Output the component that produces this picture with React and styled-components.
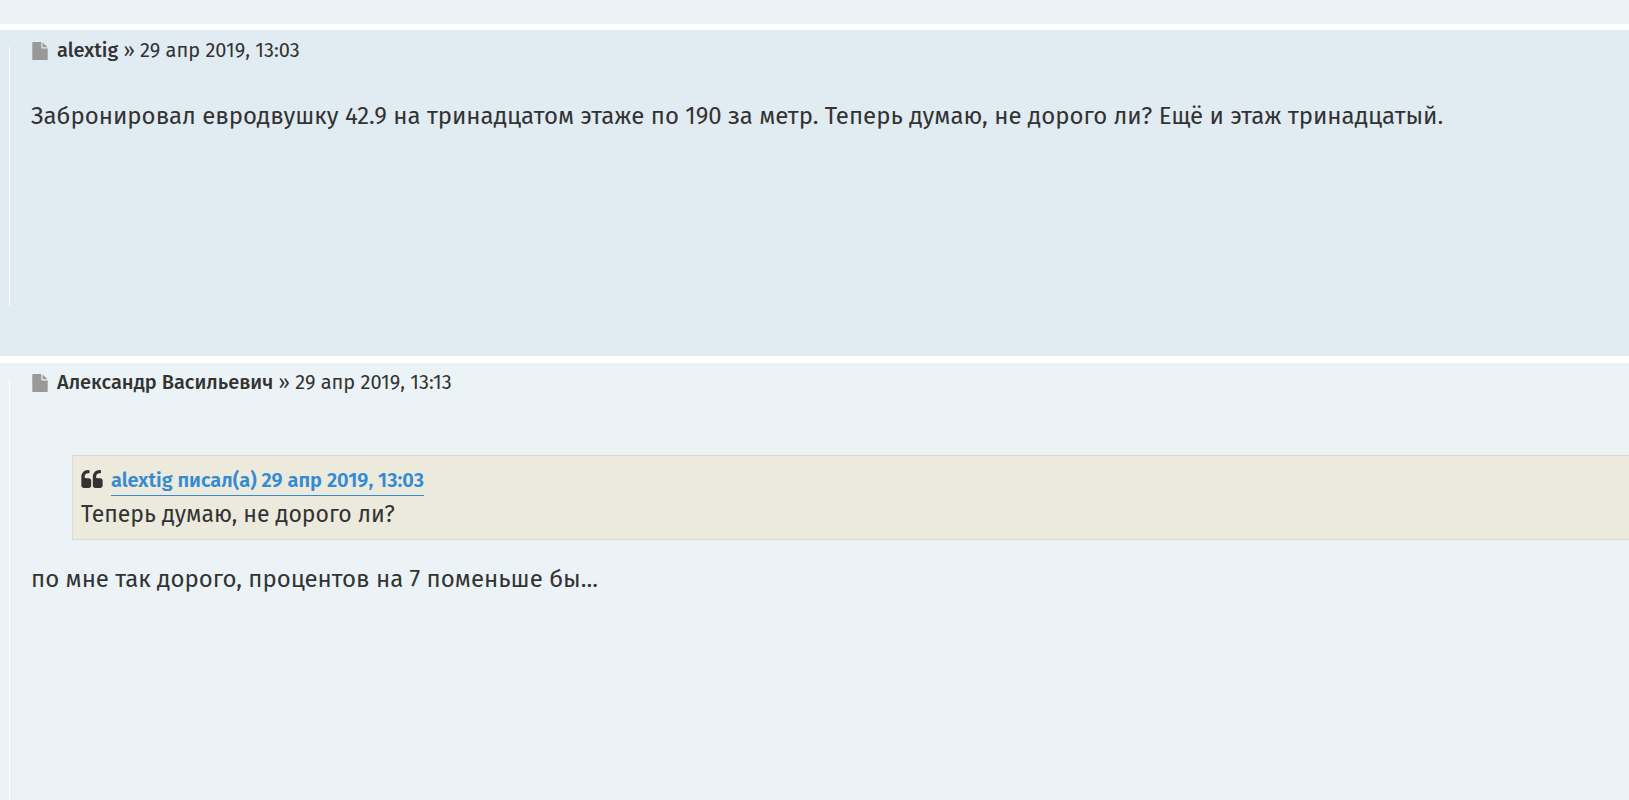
import React from 'react';
import styled, { createGlobalStyle } from 'styled-components';

const GlobalStyle = createGlobalStyle`
  * {
    box-sizing: border-box;
  }

  body {
    margin: 0;
    background: #ffffff;
    color: #333333;
    font-family: 'Fira Sans', 'Noto Sans', sans-serif;
    overflow: hidden;
  }
`;

const Topic = styled.main`
  display: flex;
  flex-direction: column;
  gap: 6px;
  min-height: 100vh;
`;

const PreviousPost = styled.div`
  height: 24px;
  background: #ebf3f6;
`;

const Post = styled.article`
  padding: ${props => props.$last ? '16px 0 0 9px' : '17px 0 50px 9px'};
  background: ${props => props.$odd ? '#ebf3f6' : '#e1ebf2'};
  flex-grow: ${props => props.$last ? 1 : 0};
  margin-bottom: ${props => props.$last ? 0 : '1px'};
  display: flex;
`;

const PostBody = styled.div`
  flex: 1;
  min-width: 0;
  min-height: 259px;
  padding-left: 21px;
  border-left: 1px solid #ffffff;
`;

const Author = styled.p`
  display: flex;
  align-items: center;
  margin: -11px 0 0;
  font-size: 20px;
  line-height: 28px;
  white-space: pre;
`;

const FileLink = styled.a`
  display: flex;
  margin: 1px 9px 0 1px;
  color: #999999;
`;

const Username = styled.strong`
  font-weight: 500;
`;

const Content = styled.div`
  margin-top: 36px;
  font-size: 24px;
  line-height: 32px;
`;

const Quote = styled.blockquote`
  margin: 59px 0 23px 41px;
  padding: 8px;
  background: #ebeadd;
  border: 1px solid #dbdbce;
  border-right: 0;
  font-size: 23px;
  line-height: 34px;

  & + ${Content} {
    margin-top: 0;
  }
`;

const Cite = styled.cite`
  display: flex;
  align-items: center;
  gap: 8px;
  height: 33px;
  font-size: 20px;
  font-style: normal;
  font-weight: 600;

  svg {
    margin-bottom: 4px;
  }
`;

const CiteLink = styled.a`
  color: #368ad2;
  line-height: 30px;
  text-decoration: none;
  border-bottom: 1px solid #368ad2;
`;

function FileIcon() {
  return (
    <svg width="16" height="18" viewBox="128 0 1536 1792" fill="currentColor" aria-hidden="true">
      <path d="M1152 512v-472q22 14 36 28l408 408q14 14 28 36h-472zm-128 32q0 40 28 68t68 28h544v1056q0 40-28 68t-68 28h-1344q-40 0-68-28t-28-68v-1600q0-40 28-68t68-28h800v544z" />
    </svg>
  );
}

function QuoteIcon() {
  return (
    <svg width="22" height="18" viewBox="64 128 1664 1408" fill="currentColor" aria-hidden="true">
      <path d="M832 960v384q0 80-56 136t-136 56h-384q-80 0-136-56t-56-136v-704q0-104 40.5-198.5t109.5-163.5 163.5-109.5 198.5-40.5h64q26 0 45 19t19 45v128q0 26-19 45t-45 19h-64q-106 0-181 75t-75 181v32q0 40 28 68t68 28h224q80 0 136 56t56 136zm896 0v384q0 80-56 136t-136 56h-384q-80 0-136-56t-56-136v-704q0-104 40.5-198.5t109.5-163.5 163.5-109.5 198.5-40.5h64q26 0 45 19t19 45v128q0 26-19 45t-45 19h-64q-106 0-181 75t-75 181v32q0 40 28 68t68 28h224q80 0 136 56t56 136z" />
    </svg>
  );
}

function PostAuthor({ id, name, date }) {
  return (
    <Author>
      <FileLink href={`#${id}`} aria-label="Сообщение">
        <FileIcon />
      </FileLink>
      <Username>{name}</Username>
      <span> » {date}</span>
    </Author>
  );
}

function App() {
  return (
    <>
      <GlobalStyle />
      <Topic>
        <PreviousPost />
        <Post id="p1">
          <PostBody>
            <PostAuthor id="p1" name="alextig" date="29 апр 2019, 13:03" />
            <Content>
              Забронировал евродвушку 42.9 на тринадцатом этаже по 190 за метр. Теперь думаю, не дорого ли? Ещё и этаж тринадцатый.
            </Content>
          </PostBody>
        </Post>
        <Post id="p2" $odd $last>
          <PostBody>
            <PostAuthor id="p2" name="Александр Васильевич" date="29 апр 2019, 13:13" />
            <Quote>
              <Cite>
                <QuoteIcon />
                <CiteLink href="#p1">alextig писал(а) 29 апр 2019, 13:03</CiteLink>
              </Cite>
              Теперь думаю, не дорого ли?
            </Quote>
            <Content>по мне так дорого, процентов на 7 поменьше бы...</Content>
          </PostBody>
        </Post>
      </Topic>
    </>
  );
}

export default App;
